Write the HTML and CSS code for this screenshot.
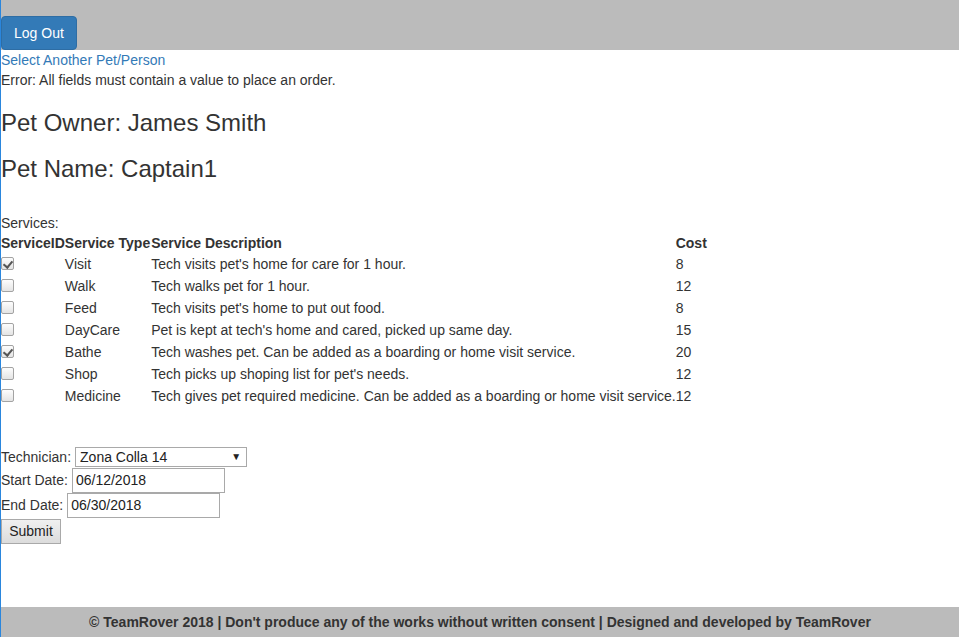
FILE: index.html
```html
<!DOCTYPE html>
<html>
<head>
<meta charset="utf-8">
<title>TeamRover - Order</title>
<link rel="stylesheet" href="styles.css">
</head>
<body>
<header class="topbar">
  <button class="btn-logout" type="button">Log Out</button>
</header>
<main class="content">
  <div class="line"><a class="link" href="#">Select Another Pet/Person</a></div>
  <div class="line">Error: All fields must contain a value to place an order.</div>
  <h3 class="heading">Pet Owner: James Smith</h3>
  <h3 class="heading">Pet Name: Captain1</h3>
  <div class="line services-label">Services:</div>
  <table class="services">
    <thead>
      <tr><th>ServiceID</th><th>Service Type</th><th>Service Description</th><th>Cost</th></tr>
    </thead>
    <tbody>
      <tr><td><input class="check" type="checkbox" checked></td><td>Visit</td><td>Tech visits pet's home for care for 1 hour.</td><td>8</td></tr>
      <tr><td><input class="check" type="checkbox"></td><td>Walk</td><td>Tech walks pet for 1 hour.</td><td>12</td></tr>
      <tr><td><input class="check" type="checkbox"></td><td>Feed</td><td>Tech visits pet's home to put out food.</td><td>8</td></tr>
      <tr><td><input class="check" type="checkbox"></td><td>DayCare</td><td>Pet is kept at tech's home and cared, picked up same day.</td><td>15</td></tr>
      <tr><td><input class="check" type="checkbox" checked></td><td>Bathe</td><td>Tech washes pet. Can be added as a boarding or home visit service.</td><td>20</td></tr>
      <tr><td><input class="check" type="checkbox"></td><td>Shop</td><td>Tech picks up shoping list for pet's needs.</td><td>12</td></tr>
      <tr><td><input class="check" type="checkbox"></td><td>Medicine</td><td>Tech gives pet required medicine. Can be added as a boarding or home visit service.</td><td>12</td></tr>
    </tbody>
  </table>
  <form class="order">
    <div class="row row-tech">
      <label>Technician:</label>
      <span class="select-wrap">
        <select class="select"><option>Zona Colla 14</option></select>
      </span>
    </div>
    <div class="row">
      <label>Start Date:</label>
      <input class="text" type="text" value="06/12/2018">
    </div>
    <div class="row">
      <label>End Date:</label>
      <input class="text" type="text" value="06/30/2018">
    </div>
    <div class="row row-submit">
      <button class="btn-submit" type="button">Submit</button>
    </div>
  </form>
</main>
<footer class="footer">© TeamRover 2018 | Don't produce any of the works without written consent | Designed and developed by TeamRover</footer>
</body>
</html>
```
FILE: styles.css
```css
* { box-sizing: border-box; }
html, body { margin: 0; padding: 0; }
body {
  min-height: 100vh;
  display: flex;
  flex-direction: column;
  border-left: 1px solid #2a86dd;
  font-family: "Liberation Sans", Arial, Helvetica, sans-serif;
  font-size: 14px;
  line-height: 20px;
  color: #333;
  background: #fff;
}
.topbar {
  height: 50px;
  background: #bbbbbb;
  display: flex;
  align-items: flex-end;
}
.btn-logout {
  height: 34px;
  padding: 6px 12px;
  font: inherit;
  font-size: 14px;
  line-height: 20px;
  color: #fff;
  background: #337ab7;
  border: 1px solid #2e6da4;
  border-radius: 4px;
  cursor: pointer;
}
.content { display: block; }
.link { color: #337ab7; text-decoration: none; }
.line { line-height: 20px; }
.heading {
  margin: 20px 0 10px;
  font-size: 24px;
  font-weight: 500;
  line-height: 26.4px;
}
.services-label { margin-top: 30px; }
.services { border-collapse: collapse; border-spacing: 0; }
.services th {
  padding: 0;
  text-align: left;
  font-weight: bold;
  height: 20px;
  line-height: 20px;
}
.services th:nth-child(2) { padding-right: 1px; }
.services td {
  padding: 0;
  height: 22px;
  line-height: 20px;
  vertical-align: middle;
}
.check {
  appearance: none;
  -webkit-appearance: none;
  display: block;
  position: relative;
  width: 13px;
  height: 13px;
  margin: 0;
  border: 1px solid #a3a3a3;
  border-radius: 2px;
  background: linear-gradient(#fdfdfd, #e4e4e4);
}
.check:checked::after {
  content: "";
  position: absolute;
  left: 3px;
  top: 1px;
  width: 4px;
  height: 7px;
  border-right: 2px solid #555;
  border-bottom: 2px solid #555;
  transform: rotate(40deg);
}
.order { margin-top: 40px; display: flex; flex-direction: column; }
.row { display: flex; align-items: center; gap: 4px; }
.row-tech { margin-bottom: 1px; }
.row-submit { margin-top: 1px; }
.select-wrap { position: relative; display: inline-block; }
.select-wrap::after {
  content: "\25BC";
  position: absolute;
  right: 6px;
  top: 4px;
  font-size: 10px;
  line-height: 12px;
  color: #222;
  pointer-events: none;
}
.select {
  appearance: none;
  -webkit-appearance: none;
  display: block;
  width: 172px;
  height: 20px;
  padding: 0 4px;
  font-family: inherit;
  font-size: 14px;
  line-height: 18px;
  color: #222;
  background: #fff;
  border: 1px solid #a9a9a9;
  border-radius: 0;
}
.text {
  width: 153px;
  height: 25px;
  padding: 1px 3px;
  font-family: inherit;
  font-size: 14px;
  color: #222;
  background: #fff;
  border: 1px solid #a9a9a9;
  border-radius: 0;
}
.btn-submit {
  width: 60px;
  height: 25px;
  padding: 1px 6px;
  font-family: inherit;
  font-size: 14px;
  color: #222;
  background: linear-gradient(#f0f0f0, #dcdcdc);
  border: 1px solid #a9a9a9;
  border-radius: 0;
}
.footer {
  margin-top: auto;
  height: 30px;
  background: #bbbbbb;
  text-align: center;
  font-weight: bold;
  line-height: 30px;
  color: #333;
}
```
